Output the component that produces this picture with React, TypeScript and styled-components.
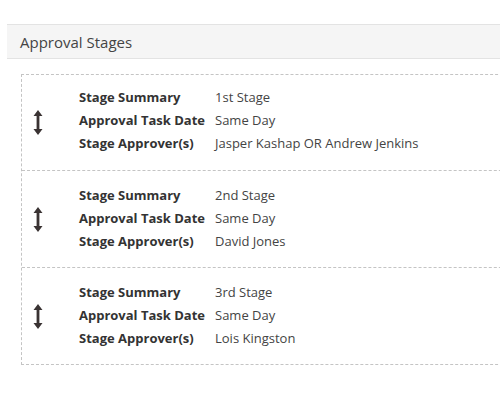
import React from "react";
import styled, { createGlobalStyle } from "styled-components";

const GlobalStyle = createGlobalStyle`
  body {
    margin: 0;
    padding: 0;
    background: #fff;
    font-family: "Open Sans", "Liberation Sans", sans-serif;
    overflow: hidden;
  }
`;

const Page = styled.div`
  width: 500px;
  height: 400px;
  padding: 24px 0 0 7px;
  box-sizing: border-box;
  overflow: hidden;
`;

const Header = styled.div`
  height: 35px;
  box-sizing: border-box;
  background: #f5f5f5;
  border-top: 1px solid #e3e3e3;
  border-bottom: 1px solid #e3e3e3;
  padding-left: 13px;
  display: flex;
  align-items: center;
  font-size: 15px;
  color: #444;
`;

const StageList = styled.div`
  margin: 15px 0 0 14px;
  width: 520px;
  border: 1px dashed #c4c4c4;
`;

const Stage = styled.div`
  display: flex;
  height: 96px;
  --pad: 14px;
  &:first-child {
    height: 95px;
    --pad: 12px;
  }
  & + & {
    border-top: 1px dashed #c4c4c4;
  }
`;

const Handle = styled.div`
  width: 57px;
  box-sizing: border-box;
  padding-left: 11px;
  display: flex;
  align-items: center;
`;

const Details = styled.div`
  display: grid;
  grid-template-columns: 136px auto;
  align-content: start;
  row-gap: 3px;
  padding-top: var(--pad);
  font-size: 13px;
  line-height: 20px;
`;

const Label = styled.div`
  font-weight: 700;
  color: #333;
`;

const Value = styled.div`
  color: #444;
`;

const SortIcon = () => (
  <svg width="10" height="25" viewBox="0 0 10 25">
    <path
      d="M5 0 L9.5 6 L6.4 6 L6.4 19 L9.5 19 L5 25 L0.5 19 L3.6 19 L3.6 6 L0.5 6 Z"
      fill="#3a3333"
    />
  </svg>
);

const stages = [
  { summary: "1st Stage", date: "Same Day", approvers: "Jasper Kashap OR Andrew Jenkins" },
  { summary: "2nd Stage", date: "Same Day", approvers: "David Jones" },
  { summary: "3rd Stage", date: "Same Day", approvers: "Lois Kingston" },
];

export default () => {
  return (
    <Page>
      <GlobalStyle />
      <Header>Approval Stages</Header>
      <StageList>
        {stages.map((s) => (
          <Stage key={s.summary}>
            <Handle>
              <SortIcon />
            </Handle>
            <Details>
              <Label>Stage Summary</Label>
              <Value>{s.summary}</Value>
              <Label>Approval Task Date</Label>
              <Value>{s.date}</Value>
              <Label>Stage Approver(s)</Label>
              <Value>{s.approvers}</Value>
            </Details>
          </Stage>
        ))}
      </StageList>
    </Page>
  );
};
